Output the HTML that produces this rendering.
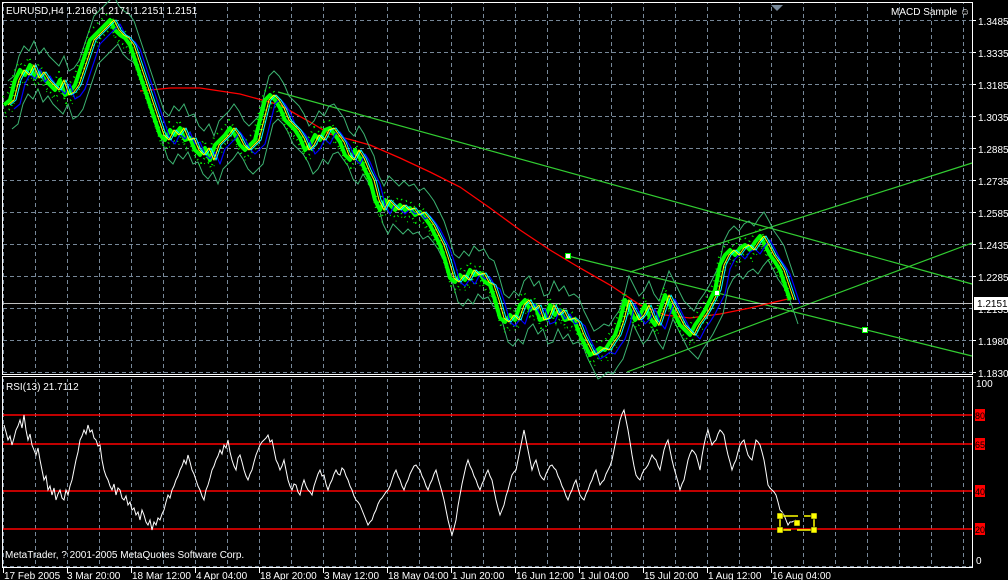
<!DOCTYPE html><html><head><style>body{margin:0;background:#000;width:1008px;height:580px;overflow:hidden}svg{display:block}text{font-family:"Liberation Sans",sans-serif;font-size:10px;fill:#fff}</style></head><body>
<svg width="1008" height="580" viewBox="0 0 1008 580" xmlns="http://www.w3.org/2000/svg">
<defs>
<pattern id="gv" x="35" y="0" width="32" height="580" patternUnits="userSpaceOnUse"><line x1="0.5" y1="0" x2="0.5" y2="580" stroke="#778899" stroke-dasharray="4,3"/></pattern>
</defs>
<g stroke="#778899" stroke-dasharray="4,3" fill="none">
<path d="M3 20.5H972M3 52.5H972M3 84.5H972M3 116.5H972M3 148.5H972M3 180.5H972M3 212.5H972M3 244.5H972M3 276.5H972M3 308.5H972M3 340.5H972M3 372.5H972M3 566.5H972"/>
</g>
<rect x="3" y="3" width="969" height="563" fill="url(#gv)"/>
<rect x="0" y="373" width="1008" height="6" fill="#000"/>
<g stroke="#778899" stroke-dasharray="4,3"><path d="M3 372.5H972"/></g>
<polygon points="771,5 783,5 777,11" fill="#778899"/>
<g stroke="#fff" fill="none"><path d="M2.5 2.5H972.5V374.5H2.5Z"/><path d="M2.5 376.5H972.5V567.5H2.5Z"/></g>
<g stroke="#32cd32" stroke-width="1.2" fill="none">
<line x1="278" y1="92" x2="972" y2="284"/>
<line x1="630" y1="272" x2="972" y2="163"/>
<line x1="627" y1="372" x2="972" y2="243"/>
<line x1="568" y1="256" x2="972" y2="356"/>
</g>
<line x1="3" y1="303.5" x2="972" y2="303.5" stroke="#c0c0c0"/>
<polyline fill="none" stroke="#ff0000" stroke-width="1.3" points="140,91 170,88 200,88 240,94 280,105 310,122 330,134 370,145 400,158 430,172 460,187 490,208 520,230 550,250 580,268 610,285 640,305 665,315 690,318 720,314 750,308 775,302 792,298"/>
<g fill="none" stroke="#3cb371" stroke-width="1">
<polyline id="pr" transform="translate(4,-24)" points="4,105 10,100 15,80 20,70 25,75 30,65 35,78 40,72 45,80 50,85 55,90 60,80 65,95 70,92 75,85 80,70 85,55 90,40 95,35 100,30 105,25 110,20 115,30 120,35 125,38 130,45 135,60 140,75 145,90 150,105 155,120 160,135 165,140 170,130 175,135 180,128 185,140 190,138 195,150 200,155 205,148 210,160 215,145 220,140 225,135 230,128 235,135 240,145 245,150 250,145 255,140 260,120 265,100 270,95 275,100 280,108 285,120 290,125 295,130 300,138 305,150 310,145 315,135 320,140 325,130 330,128 335,135 340,142 345,155 350,160 355,150 360,158 365,170 370,180 375,200 380,210 385,200 390,205 395,210 400,205 405,210 410,208 415,215 420,212 425,218 430,225 435,235 440,245 445,260 450,278 455,282 460,275 465,280 470,270 475,275 480,273 485,282 490,285 495,300 500,318 505,322 510,315 515,320 520,305 525,300 530,310 535,305 540,320 545,318 550,305 555,315 560,310 565,320 570,318 575,322 580,335 585,345 590,355 595,352 600,348 605,350 610,342 615,335 620,320 625,300 630,310 635,320 640,315 645,305 650,318 655,325 660,310 665,295 670,305 675,315 680,325 685,330 690,335 695,325 700,318 705,310 710,300 715,290 720,265 725,255 730,250 735,255 740,248 745,245 750,250 755,242 760,236 765,245 770,255 775,262 780,270 785,285 790,300"/>
<use href="#pr" transform="translate(4,48)"/>
</g>
<g fill="none" stroke-linejoin="round">
<use href="#pr" transform="translate(-4,24)" stroke="#00ff00" stroke-width="4"/>
<use href="#pr" transform="translate(-3,32)" stroke="#00ff00" stroke-width="2" stroke-dasharray="1,4"/>
<use href="#pr" transform="translate(-5,16)" stroke="#00ff00" stroke-width="2" stroke-dasharray="1,5"/>
<use href="#pr" transform="translate(-2,36)" stroke="#00ff00" stroke-width="1" stroke-dasharray="1,7"/>
<use href="#pr" transform="translate(6,28)" stroke="#0000ff" stroke-width="1.2"/>
<use href="#pr" transform="translate(2,24)" stroke="#00ffff" stroke-width="1"/>
<use href="#pr" transform="translate(0,24)" stroke="#ffff00" stroke-width="1"/>
</g>
<g fill="#fff" stroke="#00ff00"><rect x="565.5" y="253.5" width="5" height="5"/><rect x="714.5" y="290.5" width="5" height="5"/><rect x="862.5" y="327.5" width="5" height="5"/></g>
<g stroke="#ff0000" stroke-width="1.5"><line x1="3" y1="415" x2="972" y2="415"/><line x1="3" y1="444" x2="972" y2="444"/><line x1="3" y1="491" x2="972" y2="491"/><line x1="3" y1="529" x2="972" y2="529"/></g>
<polyline fill="none" stroke="#fff" stroke-width="1" points="4,425 6,432 8,440 10,436 12,445 14,438 16,430 18,426 20,420 22,428 24,415 26,430 28,440 30,434 32,445 34,450 36,455 38,448 40,460 42,470 44,480 46,476 48,490 50,486 52,495 54,488 56,500 58,494 60,490 62,498 64,500 66,490 68,495 70,486 72,480 74,470 76,460 78,452 80,440 82,436 84,430 86,434 88,425 90,432 92,430 94,438 96,440 98,446 100,445 102,460 104,470 106,476 108,480 110,486 112,490 114,484 116,495 118,488 120,490 122,498 124,500 126,496 128,505 130,502 132,510 134,508 136,515 138,512 140,520 142,510 144,515 146,522 148,525 150,520 152,530 154,522 156,525 158,518 160,520 162,514 164,510 166,502 168,495 170,498 172,490 174,486 176,480 178,476 180,470 182,466 184,460 186,464 188,455 190,462 192,470 194,474 196,480 198,486 200,490 202,496 204,500 206,490 208,485 210,478 212,470 214,466 216,460 218,456 220,450 222,454 224,445 226,448 228,440 230,452 232,460 234,466 236,470 238,458 240,455 242,462 244,470 246,476 248,480 250,474 252,470 254,462 256,455 258,450 260,445 262,442 264,440 266,438 268,435 270,442 272,440 274,450 276,460 278,464 280,470 282,466 284,460 286,470 288,480 290,486 292,490 294,484 296,485 298,492 300,495 302,486 304,480 306,486 308,490 310,492 312,495 314,486 316,480 318,474 320,470 322,476 324,475 326,484 328,490 330,484 332,480 334,474 336,470 338,474 340,475 342,468 344,470 346,476 348,480 350,486 352,490 354,496 356,500 358,502 360,505 362,510 364,515 366,520 368,525 370,522 372,520 374,514 376,510 378,504 380,500 382,498 384,495 386,492 388,490 390,486 392,480 394,474 396,470 398,476 400,480 402,486 404,490 406,484 408,480 410,474 412,470 414,466 416,465 418,468 420,470 422,476 424,480 426,486 428,490 430,484 432,480 434,474 436,470 438,478 440,485 442,492 444,500 446,510 448,520 450,528 452,535 454,528 456,520 458,506 460,495 462,484 464,475 466,466 468,460 470,466 472,470 474,476 476,480 478,486 480,490 482,484 484,480 486,474 488,470 490,476 492,480 494,490 496,500 498,508 500,515 502,510 504,505 506,496 508,490 510,482 512,475 514,472 516,470 518,460 520,450 522,440 524,430 526,440 528,450 530,460 532,470 534,464 536,460 538,468 540,475 542,478 544,480 546,474 548,470 550,466 552,465 554,468 556,470 558,476 560,480 562,486 564,490 566,496 568,500 570,494 572,490 574,484 576,480 578,488 580,495 582,498 584,500 586,494 588,490 590,484 592,480 594,474 596,470 598,478 600,485 602,482 604,480 606,474 608,470 610,466 612,460 614,450 616,440 618,430 620,420 622,414 624,410 626,420 628,430 630,442 632,455 634,466 636,475 638,478 640,480 642,474 644,470 646,468 648,465 650,460 652,455 654,458 656,460 658,466 660,470 662,460 664,450 666,444 668,440 670,450 672,460 674,468 676,475 678,482 680,490 682,484 684,480 686,470 688,460 690,454 692,450 694,452 696,455 698,462 700,470 702,456 704,445 706,436 708,430 710,438 712,445 714,442 716,440 718,434 720,430 722,432 724,435 726,446 728,455 730,462 732,470 734,464 736,460 738,452 740,445 742,442 744,440 746,448 748,455 750,458 752,460 754,450 756,440 758,442 760,445 762,452 764,460 766,472 768,485 770,488 772,490 774,492 776,495 778,502 780,510 782,512 784,515 786,520 788,525 790,522 792,522 794,521 796,520"/>
<g stroke="#ffff00" stroke-width="1.5" fill="none"><path d="M780 516H798M804 516H814M780 530H791M797 530H814M780 516V530M814 516V530"/></g>
<g fill="#ffff00" stroke="#000" stroke-width="0.5"><rect x="777" y="513" width="6" height="6"/><rect x="811" y="513" width="6" height="6"/><rect x="777" y="527" width="6" height="6"/><rect x="811" y="527" width="6" height="6"/><rect x="794" y="520" width="6" height="6"/></g>
<text x="6" y="14">EURUSD,H4  1.2166 1.2171 1.2151 1.2151</text>
<text x="891" y="15">MACD Sample ☺</text>
<text x="6" y="390">RSI(13) 21.7112</text>
<text x="5" y="558">MetaTrader, ? 2001-2005 MetaQuotes Software Corp.</text>
<g><text x="978" y="25">1.3485</text><text x="978" y="57">1.3335</text><text x="978" y="89">1.3185</text><text x="978" y="121">1.3035</text><text x="978" y="153">1.2885</text><text x="978" y="185">1.2735</text><text x="978" y="217">1.2585</text><text x="978" y="249">1.2435</text><text x="978" y="281">1.2285</text><text x="978" y="313">1.2135</text><text x="978" y="345">1.1980</text><text x="978" y="377">1.1830</text></g>
<rect x="974" y="297" width="34" height="13" fill="#fff"/><text x="977" y="307" style="fill:#000">1.2151</text>
<g stroke="#fff"><path d="M972 20.5h4M972 52.5h4M972 84.5h4M972 116.5h4M972 148.5h4M972 180.5h4M972 212.5h4M972 244.5h4M972 276.5h4M972 340.5h4M972 372.5h4"/></g>
<text x="976" y="387">100</text><text x="976" y="564">0</text>
<g fill="#ff0000"><rect x="975" y="409" width="10" height="12"/><rect x="975" y="438" width="10" height="12"/><rect x="975" y="485" width="10" height="12"/><rect x="975" y="523" width="10" height="12"/></g>
<g style="font-size:9px"><text x="975" y="419" style="fill:#000;font-size:9px">80</text><text x="975" y="448" style="fill:#000;font-size:9px">65</text><text x="975" y="495" style="fill:#000;font-size:9px">40</text><text x="975" y="533" style="fill:#000;font-size:9px">20</text></g>
<g stroke="#fff"><path d="M3.5 567v6M67.5 567v6M131.5 567v6M195.5 567v6M259.5 567v6M323.5 567v6M387.5 567v6M451.5 567v6M515.5 567v6M579.5 567v6M643.5 567v6M707.5 567v6M771.5 567v6"/></g>
<g><text x="4" y="579">17 Feb 2005</text><text x="67" y="579">3 Mar 20:00</text><text x="132" y="579">18 Mar 12:00</text><text x="196" y="579">4 Apr 04:00</text><text x="260" y="579">18 Apr 20:00</text><text x="324" y="579">3 May 12:00</text><text x="388" y="579">18 May 04:00</text><text x="452" y="579">1 Jun 20:00</text><text x="516" y="579">16 Jun 12:00</text><text x="580" y="579">1 Jul 04:00</text><text x="644" y="579">15 Jul 20:00</text><text x="708" y="579">1 Aug 12:00</text><text x="772" y="579">16 Aug 04:00</text></g>
</svg></body></html>
